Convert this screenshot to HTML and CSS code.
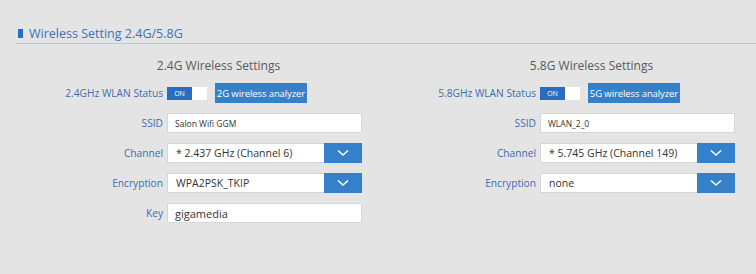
FILE: index.html
```html
<!DOCTYPE html>
<html lang="en">
<head>
  <meta charset="UTF-8">
  <title>Wireless Setting</title>
  <link rel="stylesheet" href="styles.css">
</head>
<body>
  <div class="panel">
    <h2 class="panel-title"><span class="mark"></span>Wireless Setting 2.4G/5.8G</h2>

    <div class="columns">
      <!-- 2.4G block -->
      <div class="band">
        <h3>2.4G Wireless Settings</h3>
        <div class="row">
          <label>2.4GHz WLAN Status</label>
          <div class="field status">
            <span class="toggle"><span class="on">ON</span></span>
            <button class="analyzer">2G wireless analyzer</button>
          </div>
        </div>
        <div class="row">
          <label>SSID</label>
          <input class="text small" type="text" value="Salon Wifi GGM">
        </div>
        <div class="row">
          <label>Channel</label>
          <div class="select"><span>* 2.437 GHz (Channel 6)</span><i class="arrow"><svg width="12" height="8" viewBox="0 0 12 8"><path d="M1 1.5 L6 6 L11 1.5" fill="none" stroke="#fff" stroke-width="1.6"/></svg></i></div>
        </div>
        <div class="row">
          <label>Encryption</label>
          <div class="select"><span>WPA2PSK_TKIP</span><i class="arrow"><svg width="12" height="8" viewBox="0 0 12 8"><path d="M1 1.5 L6 6 L11 1.5" fill="none" stroke="#fff" stroke-width="1.6"/></svg></i></div>
        </div>
        <div class="row">
          <label>Key</label>
          <input class="text" type="text" value="gigamedia">
        </div>
      </div>

      <!-- 5.8G block -->
      <div class="band">
        <h3>5.8G Wireless Settings</h3>
        <div class="row">
          <label>5.8GHz WLAN Status</label>
          <div class="field status">
            <span class="toggle"><span class="on">ON</span></span>
            <button class="analyzer">5G wireless analyzer</button>
          </div>
        </div>
        <div class="row">
          <label>SSID</label>
          <input class="text small" type="text" value="WLAN_2_0">
        </div>
        <div class="row">
          <label>Channel</label>
          <div class="select"><span>* 5.745 GHz (Channel 149)</span><i class="arrow"><svg width="12" height="8" viewBox="0 0 12 8"><path d="M1 1.5 L6 6 L11 1.5" fill="none" stroke="#fff" stroke-width="1.6"/></svg></i></div>
        </div>
        <div class="row">
          <label>Encryption</label>
          <div class="select"><span>none</span><i class="arrow"><svg width="12" height="8" viewBox="0 0 12 8"><path d="M1 1.5 L6 6 L11 1.5" fill="none" stroke="#fff" stroke-width="1.6"/></svg></i></div>
        </div>
      </div>
    </div>
  </div>
</body>
</html>
```

FILE: styles.css
```css
/* Base */
body {
  margin: 0;
  background: #e4e4e4;
  font-family: "Open Sans", "Noto Sans", Arial, sans-serif;
  color: #444;
}
.panel {
  padding: 24px 0 0 15px;
}

/* Section title */
.panel-title {
  margin: 0;
  display: flex;
  align-items: center;
  height: 16px;
  padding: 1px 0 2px 3px;
  border-bottom: 1px solid #bcc8d2;
  font-size: 12.5px;
  font-weight: normal;
  color: #3872ba;
}
.mark {
  width: 5px;
  height: 9px;
  background: #2a6cc0;
  margin-right: 6px;
}

/* Two bands */
.columns {
  display: grid;
  grid-template-columns: 373px 373px;
  padding-left: 17px;
  padding-top: 14px;
}
.band h3 {
  margin: 0 0 9px;
  text-align: center;
  font-size: 12px;
  font-weight: normal;
  color: #5a5a5a;
  line-height: 16px;
}
.row {
  display: flex;
  align-items: center;
  height: 20px;
  margin-bottom: 10px;
}
.row label {
  width: 135px;
  padding-right: 4px;
  box-sizing: border-box;
  text-align: right;
  font-size: 10.2px;
  color: #3b6db0;
  white-space: nowrap;
}

/* Status toggle + analyzer button */
.status {
  display: flex;
  align-items: center;
}
.toggle {
  display: flex;
  width: 40px;
  height: 13px;
  background: #fff;
}
.toggle .on {
  width: 25px;
  background: #2a6cc0;
  color: #fff;
  font-size: 7px;
  line-height: 13px;
  text-align: center;
}
.analyzer {
  margin-left: 8px;
  width: 92px;
  height: 20px;
  padding: 0;
  border: none;
  background: #3580ca;
  color: #fff;
  font-family: inherit;
  font-size: 9.5px;
  letter-spacing: -0.1px;
}

/* Inputs and selects */
.text, .select {
  width: 195px;
  height: 20px;
  box-sizing: border-box;
  background: #fff;
  border: 1px solid #d6d6d6;
  font-family: inherit;
}
.text {
  padding: 0 7px;
  font-size: 11px;
  color: #333;
}
.text.small {
  font-size: 8.5px;
}
.select {
  display: flex;
  align-items: center;
  border-right: none;
  font-size: 10.5px;
  color: #333;
}
.select span {
  flex: 1;
  padding-left: 8px;
}
.arrow {
  width: 38px;
  height: 20px;
  background: #3580ca;
  display: flex;
  align-items: center;
  justify-content: center;
}
```
